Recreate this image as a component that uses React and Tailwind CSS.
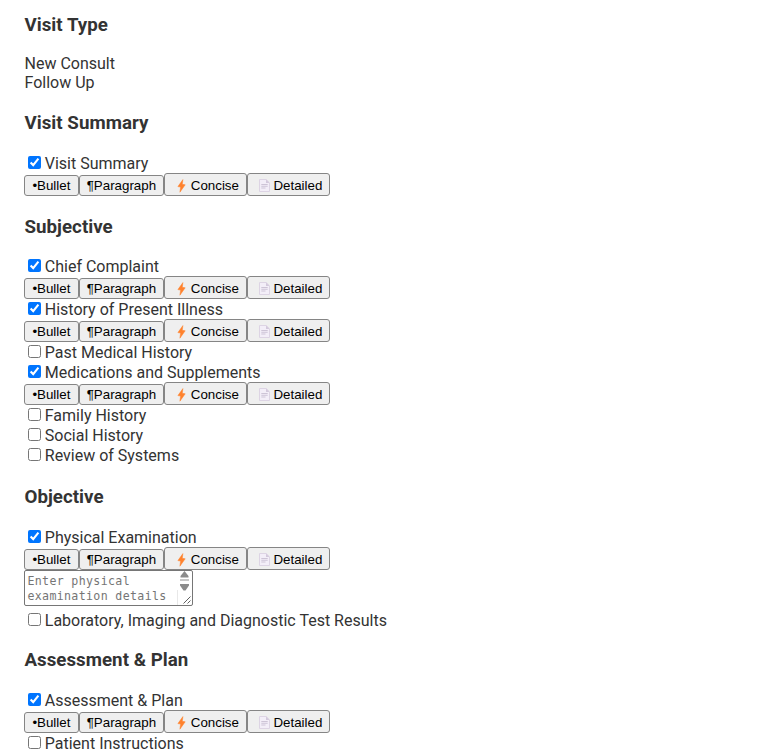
import React from "react";

function Bolt() {
  return (
    <svg className="absolute left-[11px] top-[5px]" width="11" height="14" viewBox="0 0 11 14">
      <path d="M6.9 0.6 L1.9 7.6 L4.6 8.1 L3.9 13.2 L9.2 5.8 L6.3 5.3 Z" fill="#ff822d" stroke="#ff822d" strokeWidth="0.5" />
    </svg>
  );
}

function Page() {
  return (
    <svg className="absolute left-[11px] top-[5px]" width="12" height="14" viewBox="0 0 12 14">
      <path d="M0.5 0.5 H7.2 L10.5 3.8 V12.5 H0.5 Z" fill="#f3eef8" stroke="#ddd4e4" />
      <path d="M7 0.5 V4 H10.5 Z" fill="#d3c9dc" />
      <path d="M2.3 5.5 H8.7 M2.3 7.3 H8.7 M2.3 9 H6.5" stroke="#cdc4d6" strokeWidth="1.1" />
    </svg>
  );
}

const BTN =
  "relative box-border rounded-[3px] border border-[#858585] bg-[#efefef] p-0 text-left font-['Liberation_Sans',Arial,sans-serif] text-[13.333px] leading-[19px] whitespace-nowrap text-black";

function Formats() {
  return (
    <div className="flex h-[23px] items-end">
      <button className={`${BTN} h-[21px] w-[54.3px] pl-[7px]`}>•Bullet</button>
      <button className={`${BTN} h-[21px] w-[85.2px] pl-[7px]`}>¶Paragraph</button>
      <button className={`${BTN} h-[23px] w-[83px] pt-[2px] pl-[25.9px]`}>
        <Bolt />
        Concise
      </button>
      <button className={`${BTN} h-[23px] w-[83px] pt-[2px] pl-[25.6px]`}>
        <Page />
        Detailed
      </button>
    </div>
  );
}

function Option({ label, checked = false, children }) {
  return (
    <div>
      <label className="flex h-5 items-start whitespace-nowrap">
        <input type="checkbox" defaultChecked={checked} className="mt-[3px] mr-[3.4px] ml-1 h-[13px] w-[13px] shrink-0" />
        <span className="pt-px leading-5">{label}</span>
      </label>
      {checked && <Formats />}
      {children}
    </div>
  );
}

function Heading({ children }) {
  return <h3 className="h-[22px] pl-[0.1px] text-[18.72px] leading-[22px] font-bold tracking-[0.03px]">{children}</h3>;
}

function Details() {
  return (
    <div className="relative mb-1 h-9 w-[169px] overflow-hidden rounded-[2px] border border-[#767676] bg-white">
      <textarea
        className="block h-[34px] w-[152px] resize-none overflow-hidden p-[2px] pt-[3px] font-['DejaVu_Sans_Mono',monospace] text-[11.6px] leading-[15px] tracking-[0.35px] outline-none placeholder:text-[#757575]"
        placeholder="Enter physical examination details"
      />
      <svg className="absolute top-0 right-0" width="15" height="34" viewBox="0 0 15 34">
        <path d="M0.5 19 V34" stroke="#e8e8e8" />
        <path d="M7.5 0 L11.5 5 V6.5 H3.5 V5 Z M3 13 H12 V14.5 L8.5 19.5 H6.5 L3 14.5 Z" fill="#8b8b8b" />
        <path d="M3 9 H12" stroke="#b5b5b5" strokeWidth="1.5" />
        <path d="M6.5 32.5 L13.5 25.5 M10.5 32.5 L13.5 29.5" stroke="#606060" />
      </svg>
    </div>
  );
}

export default function App() {
  return (
    <main className="h-[750px] overflow-hidden bg-white pt-[14px] pl-[24.4px] font-[Roboto,sans-serif] text-base text-[#333]">
      <Heading>Visit Type</Heading>
      <div className="mt-[18px] mb-5 pl-[0.1px] leading-[19px]">
        <div>New Consult</div>
        <div>Follow Up</div>
      </div>
      <Heading>Visit Summary</Heading>
      <div className="mt-[19px] mb-5">
        <Option label="Visit Summary" checked />
      </div>
      <Heading>Subjective</Heading>
      <div className="mt-[18px] mb-[21px]">
        <Option label="Chief Complaint" checked />
        <Option label="History of Present Illness" checked />
        <Option label="Past Medical History" />
        <Option label="Medications and Supplements" checked />
        <Option label="Family History" />
        <Option label="Social History" />
        <Option label="Review of Systems" />
      </div>
      <Heading>Objective</Heading>
      <div className="mt-[19px] mb-[19px]">
        <Option label="Physical Examination" checked>
          <Details />
        </Option>
        <Option label="Laboratory, Imaging and Diagnostic Test Results" />
      </div>
      <Heading>Assessment &amp; Plan</Heading>
      <div className="mt-[19px]">
        <Option label="Assessment & Plan" checked />
        <Option label="Patient Instructions" />
      </div>
    </main>
  );
}
